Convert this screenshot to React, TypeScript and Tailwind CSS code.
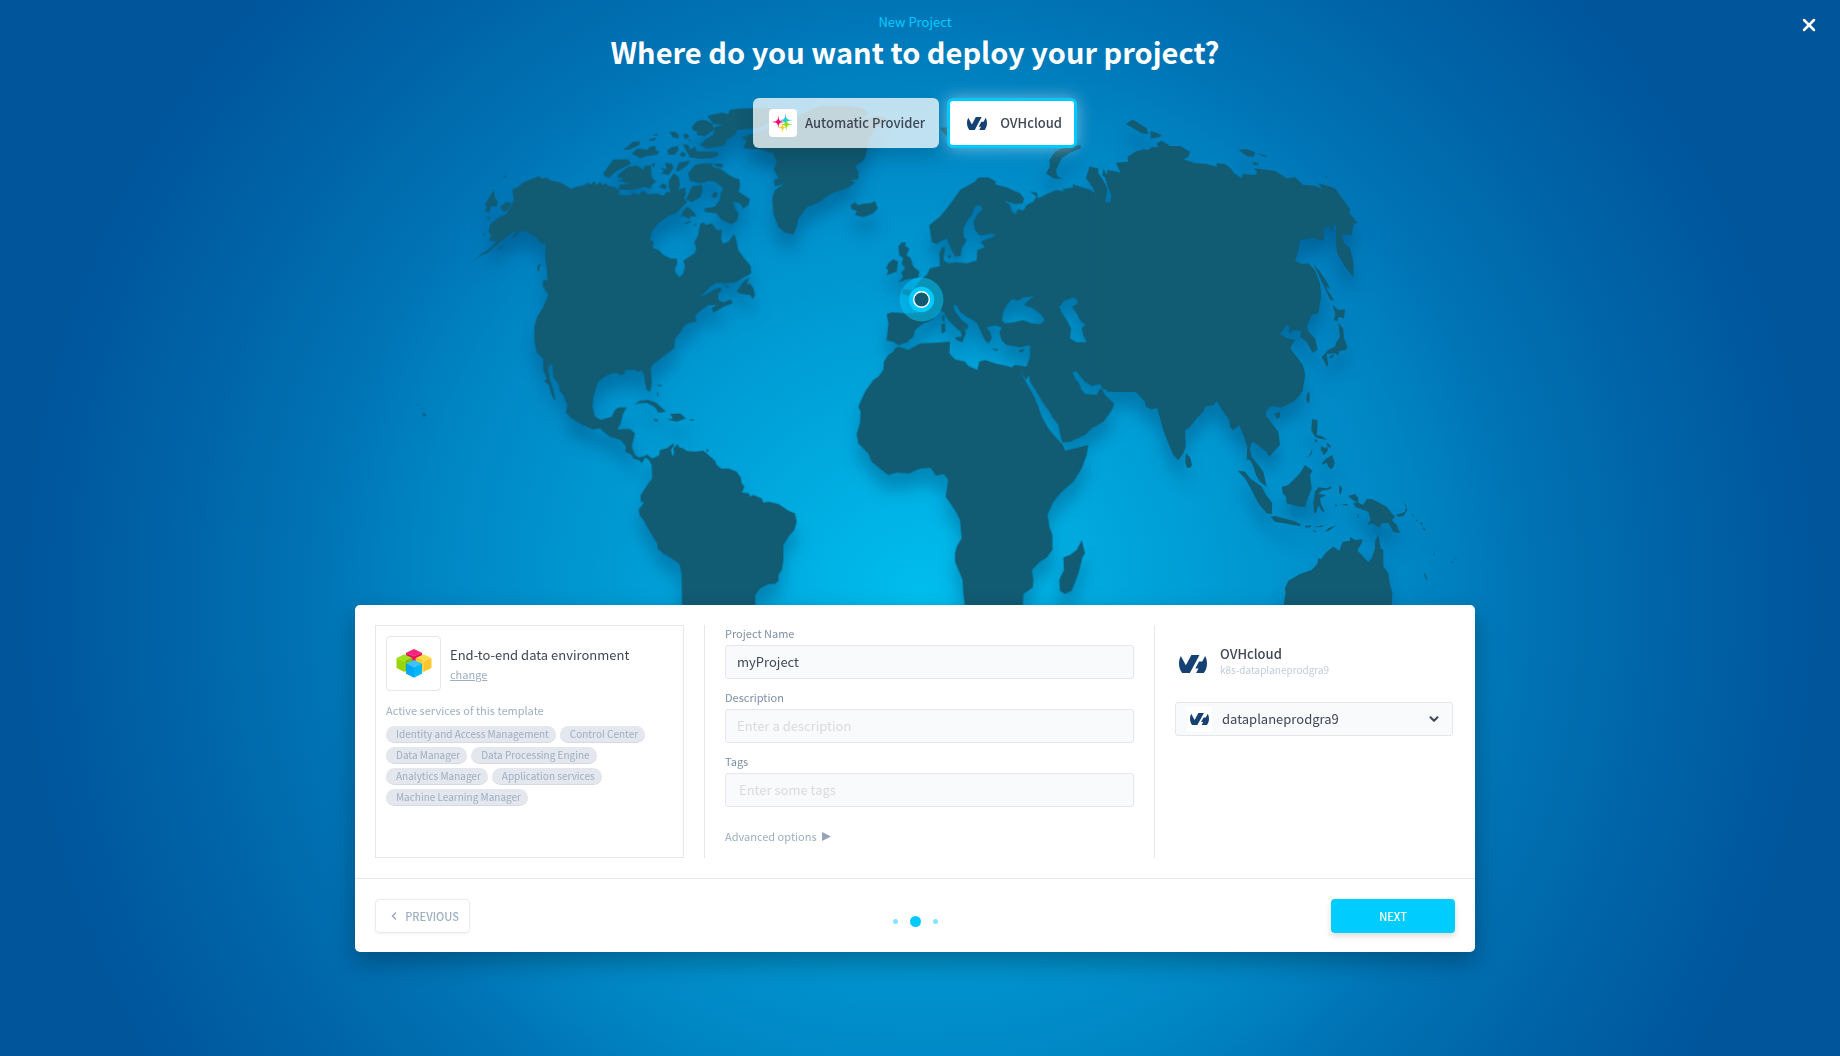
import { useState } from "react";
import { ChevronDown, ChevronLeft, X } from "lucide-react";

const services = [
  "Identity and Access Management",
  "Control Center",
  "Data Manager",
  "Data Processing Engine",
  "Analytics Manager",
  "Application services",
  "Machine Learning Manager",
];

function OvhLogo({ className }: { className: string }) {
  return (
    <svg viewBox="0 4.8 24 14.4" className={className} fill="#164273" preserveAspectRatio="none" aria-hidden="true">
      <path d="M19.881 10.095l2.563-4.45C23.434 7.389 24 9.404 24 11.555c0 2.88-1.017 5.523-2.71 7.594h-6.62l2.04-3.541h-2.696l3.176-5.513h2.691zm-2.32-5.243L9.333 19.14l.003.009H2.709C1.014 17.077 0 14.435 0 11.555c0-2.152.57-4.17 1.561-5.918L5.855 13.096l4.746-8.244h6.96z" />
    </svg>
  );
}

function Sparkles() {
  const star = "M0 -6C.4 -1.4 1.4 -.4 6 0C1.4 .4 .4 1.4 0 6C-.4 1.4 -1.4 .4 -6 0C-1.4 -.4 -.4 -1.4 0 -6Z";
  return (
    <svg viewBox="0 0 28 28" className="size-7" aria-hidden="true">
      <path d={star} transform="translate(9.3 12.9) scale(.95)" fill="#f5006e" stroke="#f5006e" strokeWidth=".2" />
      <path d={star} transform="translate(16.6 11.2)" fill="#1cc3ee" stroke="#1cc3ee" strokeWidth=".2" />
      <path d={star} transform="translate(17.3 15.5) scale(.95)" fill="#8be01c" stroke="#8be01c" strokeWidth=".2" />
      <path d={star} transform="translate(13.4 18.6) scale(.65)" fill="#ffc81e" stroke="#ffc81e" strokeWidth=".6" />
    </svg>
  );
}

function Cube({ x, y, top, left, right }: { x: number; y: number; top: string; left: string; right: string }) {
  return (
    <g transform={`translate(${x} ${y})`}>
      <path d="M0 0L24 11L0 22L-24 11Z" fill={top} />
      <path d="M-24 11L0 22V54L-24 42Z" fill={left} />
      <path d="M24 11L0 22V54L24 42Z" fill={right} />
    </g>
  );
}

function Cubes() {
  return (
    <svg viewBox="0 0 108 88" className="h-[29px] w-9" aria-hidden="true">
      <Cube x={54} y={0} top="#f7247b" left="#ea0a62" right="#ea0a62" />
      <Cube x={25} y={16} top="#9fe01f" left="#97d600" right="#83c400" />
      <Cube x={83} y={16} top="#ffdc4a" left="#ffcf22" right="#ffc52e" />
      <Cube x={54} y={33} top="#3cc4f8" left="#00a8f4" right="#00b8fb" />
    </svg>
  );
}

const americas = [
  "M337 298L350 293 372 276 400 265 418 258 424 266 440 264 455 272 480 277 500 288 512 297 530 290 550 286 565 278 572 284 583 273 588 286 600 276 606 284 618 281 625 288 645 292 660 305 655 314 690 317 700 308 715 315 730 302 745 313 770 310 790 318 800 305 812 308 806 290 808 270 822 250 836 262 840 285 834 300 855 292 858 310 852 325 862 335 845 352 830 368 806 378 790 388 772 402 757 422 749 448 760 455 758 474 775 480 790 495 812 505 830 506 832 520 825 535 826 548 838 562 850 550 855 530 850 512 868 500 884 490 889 475 883 455 893 440 896 425 901 400 912 398 918 405 935 400 950 420 965 420 963 450 970 462 985 455 1003 432 1010 455 1014 480 1035 508 1052 528 1053 550 1035 560 1005 577 975 580 950 578 930 590 900 622 915 615 940 600 960 592 965 600 955 612 955 630 970 637 992 628 998 640 970 650 940 668 935 655 950 645 925 645 893 668 885 680 890 694 862 700 850 710 845 722 825 745 822 775 795 795 760 822 752 833 755 880 750 905 740 900 735 875 733 855 725 842 712 845 705 840 675 840 674 852 660 855 655 850 640 848 620 856 600 870 592 880 580 920 577 950 585 980 602 990 635 980 645 960 655 952 680 952 668 975 662 1000 652 1018 690 1017 705 1030 695 1070 705 1095 715 1102 728 1100 742 1094 755 1105 765 1102 778 1095 780 1080 800 1075 820 1060 822 1068 812 1080 818 1098 823 1090 820 1075 833 1062 838 1072 850 1075 860 1083 885 1085 910 1082 925 1095 945 1112 950 1125 965 1137 985 1135 1010 1145 1022 1162 1025 1180 1033 1190 1025 1207 1047 1210 1050 1220 1060 1215 1085 1225 1090 1238 1105 1235 1135 1242 1165 1262 1185 1270 1190 1295 1183 1320 1165 1340 1150 1365 1150 1410 1145 1440 1135 1455 1135 1472 1125 1482 1105 1482 1080 1495 1066 1515 1066 1600 847 1600 845 1450 838 1422 820 1408 790 1390 773 1375 772 1362 750 1325 730 1290 720 1278 716 1260 732 1237 722 1235 722 1215 742 1185 757 1165 755 1125 745 1108 735 1102 725 1120 720 1112 700 1105 695 1095 676 1085 678 1070 662 1050 630 1040 610 1025 600 1015 578 1018 540 1000 515 985 498 968 502 945 490 915 478 900 478 885 460 860 458 825 447 823 445 840 450 870 460 900 467 932 460 925 450 900 448 885 433 875 440 865 430 840 430 805 410 788 403 750 403 710 412 680 430 650 445 615 435 600 428 585 430 570 443 572 440 530 436 505 438 462 425 462 412 445 395 433 372 422 358 425 345 440 333 445 352 420 330 432 310 448 290 465 260 490 240 498 214 516 240 495 270 475 290 455 268 452 275 435 265 425 270 405 290 385 320 372 335 345 342 330Z",
  "M922 78L965 68 985 72 990 60 1020 55 1100 53 1180 60 1150 80 1080 110 1060 115 1012 120 1005 135 980 150 975 165 940 172 920 175 900 165 915 150 940 135 945 110 970 105 940 102Z",
  "M876 110L890 94 905 90 920 92 938 102 943 118 915 138 890 135 892 125 878 120Z",
  "M670 180L700 155 720 154 718 165 690 178ZM745 150L765 143 768 150 750 153ZM758 136L770 132 774 137ZM808 126L825 125 836 133 836 145 820 142ZM850 134L860 130 868 140 855 148ZM695 192L712 175 740 180 752 170 765 168 768 182 778 185 770 195 740 198 720 206 714 200ZM802 180L815 172 832 168 836 178 825 193 805 195ZM838 192L850 186 858 194 848 202ZM848 162L865 165 870 180 885 170 890 184 930 185 955 187 955 198 935 204 900 206 870 202ZM858 152L872 150 874 153Z",
  "M610 250L640 208 685 208 692 222 665 235 640 250 630 262 615 260Z",
  "M655 255L680 232 710 226 730 240 735 228 752 226 755 262 768 275 755 285 752 296 730 290 700 300 655 298 660 285 690 280 655 272 675 265 652 262Z",
  "M780 232L800 238 795 218 818 222 820 235 805 255 785 250 792 242ZM754 222L766 220 760 232ZM776 290L790 280 802 288 795 298ZM828 240L838 218 870 212 860 228 832 245Z",
  "M865 250L885 225 910 220 935 220 940 232 960 235 980 250 1000 262 1018 268 1020 290 1015 305 1030 315 1050 328 1045 345 1030 356 1020 340 1000 335 1005 355 1015 370 1012 390 995 403 965 390 950 370 915 366 912 355 945 350 960 330 962 310 970 295 945 275 925 272 900 280 870 272Z",
  "M940 222L965 220 970 232 950 230ZM876 290L905 284 908 300 900 322 875 336 858 328Z",
  "M842 382L850 362 862 350 885 370 888 380 872 378 868 387 850 378ZM852 400L870 392 874 395 860 402ZM880 408L888 400 890 405ZM934 320L942 306 955 310 945 325Z",
  "M254 345L282 298 285 325 294 335 290 350 275 348 265 368 255 360 262 348ZM300 350L320 336 335 340 320 365 305 362ZM308 262L320 255 316 262ZM262 380L272 386 264 389ZM250 432L257 432 254 438ZM292 476L312 465 300 478ZM413 524L424 522 418 532 416 548 412 540ZM432 570L450 575 457 600 452 612 435 590Z",
  "M1010 605L1030 575 1048 560 1040 585 1050 580 1060 595 1065 615 1058 627 1050 615 1025 612ZM968 583L988 590 982 592Z",
  "M702 945L720 932 745 930 768 938 798 965 775 968 765 952 740 938 715 940ZM810 972L840 970 858 985 830 995 800 988 820 985ZM868 988L885 988 880 992 870 992ZM758 987L776 990 768 995ZM768 885L785 885 784 890ZM770 905L776 912 774 922ZM52 942L57 944 54 946ZM68 968L77 972 76 978 70 981ZM62 952L73 960 70 959ZM918 1078L926 1078 922 1088Z",
];

const atlantic = [
  "M100 110L150 90 210 60 240 48 310 46 370 55 385 70 360 90 400 80 430 78 440 90 400 120 385 150 380 180 375 205 365 215 345 230 355 245 355 268 330 270 345 278 320 295 270 312 240 335 200 352 175 385 170 410 160 433 135 428 115 410 100 370 97 325 105 300 130 285 120 270 102 240 110 215 100 190 60 178 10 175 20 150 5 143 60 125Z",
  "M332 345L345 337 355 345 375 340 390 340 405 333 413 355 400 370 370 381 345 375 350 362 335 358Z",
  "M102 270L115 264 128 282 105 288Z",
  "M475 470L485 457 497 457 495 468 508 475 500 495 512 505 520 530 538 545 535 562 500 568 475 578 490 560 483 550 495 535 485 520 490 505 478 495ZM445 520L460 507 474 515 470 545 440 555 445 540 438 535Z",
  "M645 742L670 740 668 757 650 750ZM604 702L615 700 616 725 605 730ZM606 678L613 675 613 695 607 692ZM752 775L775 778 770 783ZM835 782L855 775 845 788ZM600 115L625 110 655 120 620 140ZM622 500L632 492 632 505Z",
  "M440 672L455 667 500 670 540 668 530 640 510 620 485 610 490 598 520 600 540 570 560 555 570 535 600 528 598 490 605 475 615 470 612 495 610 510 625 520 650 517 680 520 710 512 712 480 735 472 722 455 755 443 768 435 755 430 720 437 705 420 700 395 712 372 728 358 720 345 705 348 695 375 680 395 670 415 670 440 680 450 665 475 662 498 645 500 635 480 620 445 600 455 590 462 575 455 568 405 600 380 625 350 660 300 705 275 715 263 745 262 768 275 765 283 800 292 840 310 852 325 848 340 825 342 793 332 810 345 815 365 827 373 833 358 850 362 860 345 880 335 890 320 870 305 890 308 895 325 925 310 950 300 975 305 965 298 1000 292 998 283 1055 301 1055 765 870 765 840 772 820 768 800 765 785 750 778 728 785 712 765 705 745 710 740 715 750 725 755 745 745 760 735 750 725 730 712 700 700 690 680 680 660 665 650 645 640 645 645 665 665 690 685 705 680 720 672 712 678 730 668 752 665 740 662 725 650 715 625 690 610 665 600 662 590 670 575 690 550 700 525 720 520 740 500 757 475 765 460 755 440 752 445 700ZM785 690L790 665 800 645 815 627 835 632 850 622 882 618 865 632 852 645 880 655 905 675 915 692 900 702 875 700 850 690 820 697 795 700ZM958 650L975 630 1000 622 1013 630 1012 642 995 650 1010 670 1020 690 1037 705 1025 715 1030 735 1040 757 1010 758 990 745 993 715 980 690 965 668Z",
];

const africa = [
  "M570 66L900 70 900 225 885 213 835 215 805 208 790 208 780 192 755 198 735 185 718 165 708 153 697 157 705 175 720 195 722 205 735 222 770 225 782 203 795 225 822 250 818 265 805 285 790 305 755 325 735 345 690 365 668 368 663 355 655 315 640 295 625 270 610 250 590 215 570 185 567 165 558 180 545 160 560 140 570 110Z",
  "M165 85L175 80 205 90 240 70 290 68 330 65 328 100 345 118 375 125 385 138 412 150 418 125 435 120 465 130 500 138 515 142 525 135 560 140 560 155 543 157 560 190 580 225 595 260 605 290 625 325 650 355 668 375 675 392 745 375 740 405 725 445 700 485 665 515 640 545 622 585 628 620 637 645 637 690 620 712 600 725 575 750 580 780 578 802 550 822 547 900 380 900 370 820 368 780 345 725 345 700 350 680 365 655 360 600 348 575 317 530 325 480 312 462 288 467 272 443 240 445 207 460 170 457 145 465 125 450 95 425 85 400 55 370 50 342 60 310 62 275 55 260 75 215 100 180 115 170 130 150 132 125 145 105 160 95Z",
  "M725 660L735 700 728 710 715 760 695 812 675 822 660 812 658 780 672 750 670 712 690 705 710 690Z",
];

const northAsia = [
  "M205 300L225 308 220 295 198 265 208 230 235 235 235 250 258 285 262 300 255 335 270 338 275 315 265 295 255 262 248 258 250 235 260 255 262 240 290 245 302 248 288 218 325 215 322 202 345 185 370 178 385 180 395 172 415 172 410 160 425 152 450 168 480 168 510 185 505 200 490 208 525 220 560 222 590 230 590 220 615 222 635 238 640 248 665 265 668 252 705 255 712 248 703 235 765 243 800 265 825 262 850 285 885 287 907 298 895 280 925 288 945 295 970 330 990 358 988 370 1012 398 1000 405 995 435 985 432 965 435 972 460 990 475 1000 515 1000 562 975 530 952 490 948 465 948 405 940 398 940 425 925 408 912 415 912 445 905 452 880 443 840 450 835 480 825 512 845 522 865 520 885 540 900 580 903 620 895 670 875 675 868 690 860 710 865 725 885 745 893 780 878 788 860 755 840 740 845 722 820 720 808 730 808 712 800 705 780 732 800 745 825 750 812 770 812 780 830 800 848 825 855 850 850 880 848 905 262 905 262 850 205 835Z",
  "M318 102L335 90 345 92 380 115 385 132 365 130 335 112ZM392 122L425 135 418 141 392 146ZM656 180L680 178 706 187 700 200 680 198ZM712 190L740 197 735 201ZM697 220L705 216 718 224 702 225ZM916 256L922 264 918 264Z",
  "M78 250L90 230 88 210 105 185 125 175 182 165 182 175 150 188 125 205 108 240 112 258 126 267 100 265Z",
  "M880 520L900 545 920 575 932 600 920 588 922 600 943 632 930 628 915 595 905 575ZM938 645L955 660 975 658 972 685 955 680 952 695 942 690 946 672ZM955 698L970 718 972 745 982 770 978 780 958 782 955 796 945 790 920 792 925 825 920 830 912 812 905 802 925 780 945 770 950 755 960 740ZM928 800L942 792 940 800 930 806Z",
];

const southAsia = [
  "M0 30L575 30 590 60 608 80 615 110 608 145 600 165 580 185 540 203 530 200 515 198 500 210 497 225 515 250 535 275 540 315 520 335 507 352 500 335 480 320 460 305 453 310 450 330 455 350 475 375 490 395 500 440 480 425 468 405 460 378 450 360 440 358 442 320 430 285 418 255 400 270 390 262 388 240 370 215 350 183 340 195 315 200 310 215 290 235 270 260 255 270 257 320 250 340 235 360 220 345 205 310 190 270 175 215 172 203 155 208 138 200 135 185 105 153 60 156 20 150 5 135 0 130Z",
  "M258 340L270 352 276 375 270 384 260 382 256 365ZM523 222L540 215 540 230 532 238ZM620 165L628 153 629 180 625 192 619 180ZM636 238L652 240 652 265 650 285 665 288 682 300 660 296 645 290 634 272ZM643 298L652 300 648 308ZM665 318L675 325 682 320 684 330 672 346 662 328ZM682 308L692 318 690 325 680 316ZM620 355L632 340 637 325 635 342ZM665 370L680 355 697 345 704 370 700 380 695 388 685 380 680 368 668 374Z",
  "M413 392L435 395 450 415 485 440 498 465 517 490 515 522 500 520 475 490 455 450 435 415ZM512 530L525 528 560 538 580 542 602 553 600 558 565 552 525 545ZM546 440L565 435 600 400 615 375 638 392 630 405 635 445 625 470 615 500 600 500 560 490 558 470 548 460ZM640 490L645 455 655 442 680 445 695 438 690 448 665 452 655 462 678 465 660 475 662 490 675 518 665 512 655 495 648 520 642 518Z",
  "M615 558L635 556 630 562 618 563ZM645 560L670 556 668 560 648 562ZM637 570L650 574 645 577ZM675 577L685 565 710 555 690 570ZM718 435L727 445 722 465 717 455ZM722 493L742 492 742 497ZM704 494L712 494 708 500ZM745 468L765 462 775 475 775 488 790 495 800 478 815 477 835 487 860 500 875 520 885 530 875 540 890 555 900 580 880 575 865 548 845 550 838 563 815 550 802 555 812 540 805 515 785 508 765 500 760 488 772 488 755 478ZM772 522L776 524 774 536Z",
  "M888 524L905 520 915 515 918 500 922 510 910 528 895 530ZM908 487L922 500 918 500ZM935 518L943 532 938 528ZM948 538L956 544 950 543ZM960 545L970 552 964 554ZM968 560L978 570 972 570ZM1002 630L1004 650 1001 645ZM972 698L978 705 982 722 976 715ZM1054 668L1060 662 1058 670ZM1064 658L1071 650 1068 657ZM978 578L982 583 978 583Z",
  "M550 850L552 790 557 760 555 745 565 722 600 702 635 690 652 672 655 655 663 658 680 635 700 620 718 633 728 605 750 602 750 590 765 600 788 598 785 610 772 630 780 640 805 667 815 655 825 625 825 605 835 583 842 625 850 630 850 680 865 700 868 725 877 760 872 850Z",
];

function Region({ x, y, paths }: { x: number; y: number; paths: string[] }) {
  return (
    <g transform={`translate(${x} ${y}) scale(.33333)`}>
      {paths.map((d) => (
        <path key={d} d={d} fillRule="evenodd" />
      ))}
    </g>
  );
}

function WorldMap() {
  return (
    <svg viewBox="345 90 1140 520" className="absolute left-1/2 top-[90px] w-[1140px] -translate-x-1/2" aria-label="World map">
      <g fill="#115b73" className="drop-shadow-[0_16px_8px_rgba(0,40,80,0.28)]">
        <Region x={400} y={90} paths={americas} />
        <Region x={740} y={90} paths={atlantic} />
        <Region x={840} y={320} paths={africa} />
        <Region x={1020} y={90} paths={northAsia} />
        <Region x={1100} y={340} paths={southAsia} />
      </g>
      <circle cx="921.5" cy="299.5" r="22" fill="#00cbff" fillOpacity=".5" />
      <circle cx="921.5" cy="299.5" r="12.7" fill="#00cbff" />
      <circle cx="921.5" cy="299.5" r="7.8" fill="#115a71" stroke="#fff" strokeWidth="1.4" />
    </svg>
  );
}

function Field({ id, label, placeholder, value, indent }: { id: string; label: string; placeholder?: string; value?: string; indent?: boolean }) {
  return (
    <div className="mb-[10px]">
      <label htmlFor={id} className="block text-[11px] leading-4 text-[#7d8fa6]">
        {label}
      </label>
      <input
        id={id}
        defaultValue={value}
        placeholder={placeholder}
        className={
          "mt-1 h-[34px] w-full rounded-[3px] border border-[#e4e6eb] bg-[#f9fafc] pb-[2px] text-[13px] text-[#3f4656] outline-none placeholder:text-[#d8dadd] " +
          (indent ? "px-[13px]" : "px-[11px]")
        }
      />
    </div>
  );
}

export default function App() {
  const [provider, setProvider] = useState("ovh");
  return (
    <main className="relative min-h-screen overflow-hidden bg-[radial-gradient(circle_at_50%_600px,#00beee_0px,#00a0d8_250px,#0085c3_500px,#0074b5_600px,#0066a9_724px,#00559b_900px)] pr-[10px] font-['Noto_Sans_CJK_SC',sans-serif] text-[#3f4656]">
      <div className="relative flex min-h-screen flex-col items-center px-4">
        <WorldMap />
        <button aria-label="Close" className="absolute right-[11px] top-[15px] text-white">
          <X size={20} strokeWidth={3} />
        </button>
        <header className="relative flex flex-col items-center pt-3">
          <p className="text-[13px] leading-5 text-[#00cbff]">New Project</p>
          <h1 className="text-[29px] font-bold leading-[38px] text-white">Where do you want to deploy your project?</h1>
        </header>
        <div className="relative mt-7 flex gap-2">
          <button
            onClick={() => setProvider("auto")}
            aria-pressed={provider === "auto"}
            className="flex h-[50px] items-center gap-2 rounded-md bg-white/75 pl-4 pr-[14px] text-[13px] font-medium shadow-[0_10px_20px_rgba(0,0,0,0.15)]"
          >
            <span className="rounded bg-white">
              <Sparkles />
            </span>
            Automatic Provider
          </button>
          <button
            onClick={() => setProvider("ovh")}
            aria-pressed={provider === "ovh"}
            className="flex h-[50px] items-center gap-[13px] rounded-md border-[3px] border-[#00cbff] bg-white pl-[17px] pr-3 text-[13px] font-medium shadow-[0_0_16px_rgba(255,255,255,0.45)]"
          >
            <OvhLogo className="h-[13px] w-5" />
            OVHcloud
          </button>
        </div>

        <section className="relative mt-[457px] w-full max-w-[1120px] rounded-[5px] bg-white shadow-[0_10px_24px_rgba(0,0,0,0.28)]">
          <div className="flex p-5">
            <div className="mr-5 h-[233px] w-[309px] border border-[#e4e6eb] p-[10px]">
              <div className="flex items-center gap-[9px]">
                <span className="flex size-[55px] items-center justify-center rounded border border-[#e4e6eb]">
                  <Cubes />
                </span>
                <div>
                  <p className="text-[13px] leading-5">End-to-end data environment</p>
                  <a href="#change" className="block text-[11px] leading-[18px] text-[#9dafc1] underline">
                    change
                  </a>
                </div>
              </div>
              <p className="mt-[11px] text-[11px] leading-4 text-[#9dafc1]">Active services of this template</p>
              <ul className="mt-2 flex flex-wrap gap-1">
                {services.map((s) => (
                  <li key={s} className="h-[17px] rounded-full border-b border-[#d5d9e2] bg-[#e4e7ed] pl-[10px] pr-[7px] text-[10px] leading-4 text-[#9dafc1]">
                    {s}
                  </li>
                ))}
              </ul>
            </div>
            <form className="flex-1 border-l border-[#e4e6eb] px-5">
              <Field id="name" label="Project Name" value="myProject" />
              <Field id="description" label="Description" placeholder="Enter a description" />
              <Field id="tags" label="Tags" placeholder="Enter some tags" indent />
              <button type="button" className="mt-5 flex items-center gap-[5px] text-[11px] leading-[18px] text-[#9dafc1]">
                Advanced options
                <svg viewBox="0 0 9 9" className="size-[9px]" fill="#95a5b8" aria-hidden="true">
                  <path d="M0 0L9 4.5L0 9Z" />
                </svg>
              </button>
            </form>
            <div className="w-[301px] border-l border-[#e4e6eb] pl-5 pr-[2px] pt-5">
              <div className="flex items-end gap-[13px] pl-1">
                <OvhLogo className="mb-1 h-[18px] w-7" />
                <div>
                  <p className="text-[13px] font-medium leading-[18px]">OVHcloud</p>
                  <p className="text-[10px] leading-[14px] text-[#c1ccd9]">k8s-dataplaneprodgra9</p>
                </div>
              </div>
              <div className="relative mt-[25px] flex h-[34px] items-center rounded-[3px] border border-[#e4e6eb] bg-[#f9fafc]">
                <span className="ml-[11px] flex size-[25px] items-center justify-center bg-white">
                  <OvhLogo className="h-3 w-[19px]" />
                </span>
                <select aria-label="Cluster" className="h-full flex-1 appearance-none bg-transparent pl-[10px] text-[13px] outline-none">
                  <option>dataplaneprodgra9</option>
                </select>
                <ChevronDown size={14} strokeWidth={3.5} className="pointer-events-none absolute right-[11px]" />
              </div>
            </div>
          </div>
          <footer className="flex items-center justify-between border-t border-[#e4e6eb] px-5 pb-[19px] pt-5">
            <button className="flex h-[34px] w-[95px] items-center justify-between rounded border border-[#e9ebef] pl-3 pr-[10px] text-[11px] font-medium text-[#9dafc1] shadow-[0_1px_3px_rgba(0,0,0,0.05)]">
              <ChevronLeft size={12} strokeWidth={3.5} />
              PREVIOUS
            </button>
            <div className="ml-[29px] mt-[11px] flex items-center gap-3">
              <span className="size-[5px] rounded-full bg-[#80e5ff]" />
              <span className="size-[11px] rounded-full bg-[#00cbff]" />
              <span className="size-[5px] rounded-full bg-[#80e5ff]" />
            </div>
            <button className="h-[34px] w-[124px] rounded bg-[#00cdfd] text-[11px] font-medium text-white shadow-[0_3px_6px_rgba(0,0,0,0.15)]">NEXT</button>
          </footer>
        </section>
      </div>
    </main>
  );
}
